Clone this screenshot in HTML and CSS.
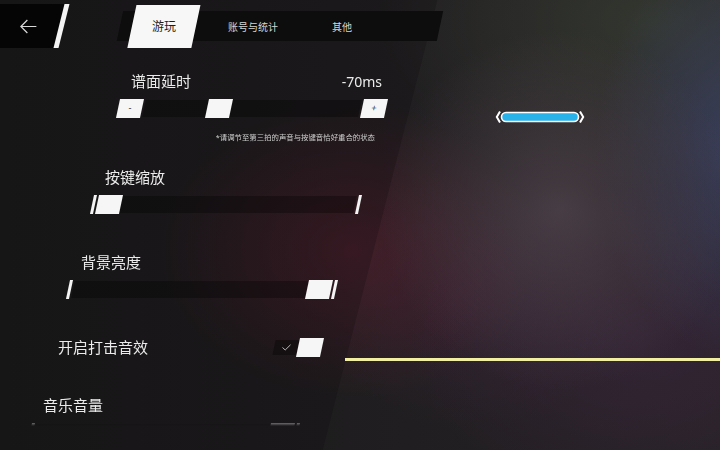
FILE: index.html
```html
<!DOCTYPE html>
<html lang="zh-CN">
<head>
    <meta charset="UTF-8">
    <meta name="viewport" content="width=device-width, initial-scale=1.0">
    <title>设置</title>
    <link rel="stylesheet" href="styles.css">
</head>
<body>
    <div class="screen">
        <header class="topbar">
            <button class="back" aria-label="返回">
                <svg width="17" height="15" viewBox="0 0 17 15"><path d="M16.5 7.5H1M7.5 1L1 7.5L7.5 14"/></svg>
            </button>
            <nav class="tabs">
                <a class="tab active"><span>游玩</span></a>
                <a class="tab"><span>账号与统计</span></a>
                <a class="tab"><span>其他</span></a>
            </nav>
        </header>

        <div class="settings">
            <div class="setting delay">
                <div class="setting-head">
                    <span class="label">谱面延时</span>
                    <span class="value">-70ms</span>
                </div>
                <div class="slider">
                    <button class="step">-</button>
                    <div class="track"><span class="handle" style="--value: 0.33"></span></div>
                    <button class="step">+</button>
                </div>
                <p class="hint">*请调节至第三拍的声音与按键音恰好重合的状态</p>
            </div>

            <div class="setting key-size">
                <div class="setting-head"><span class="label">按键缩放</span></div>
                <div class="slider">
                    <span class="slash"></span>
                    <div class="track"><span class="handle" style="--value: 0"></span></div>
                    <span class="slash"></span>
                </div>
            </div>

            <div class="setting brightness">
                <div class="setting-head"><span class="label">背景亮度</span></div>
                <div class="slider">
                    <span class="slash"></span>
                    <div class="track"><span class="handle" style="--value: 1"></span></div>
                    <span class="slash"></span>
                </div>
            </div>

            <div class="setting hit-sound">
                <span class="label">开启打击音效</span>
                <div class="toggle">
                    <span class="check">
                        <svg width="9" height="7" viewBox="0 0 9 7"><path d="M0.5 3.5L3.2 6L8.5 0.8"/></svg>
                    </span>
                    <span class="knob"></span>
                </div>
            </div>

            <div class="setting music-volume">
                <div class="setting-head"><span class="label">音乐音量</span></div>
                <div class="slider">
                    <span class="slash"></span>
                    <div class="track"><span class="handle" style="--value: 1"></span></div>
                    <span class="slash"></span>
                </div>
            </div>
        </div>

        <!-- gameplay preview -->
        <svg class="note" width="90" height="14" viewBox="0 0 90 14">
            <path d="M5 1.5L1.8 7L5 12.5M85 1.5L88.2 7L85 12.5" fill="none" stroke="#fff" stroke-width="2"/>
            <rect x="6.5" y="2.5" width="77" height="9" rx="4.5" fill="#29b2ea" stroke="#fff" stroke-width="1.6"/>
        </svg>
        <div class="judge-line"></div>
    </div>
</body>
</html>
```

FILE: styles.css
```css
* {
    box-sizing: border-box;
}
body {
    margin: 0;
    background: #171617;
    font-family: "Noto Sans", "Noto Sans CJK SC", sans-serif;
    color: #ececec;
}
.screen {
    position: relative;
    isolation: isolate;
    width: 720px;
    height: 450px;
    overflow: hidden;
    background:
        radial-gradient(circle at 560px 210px, rgba(82, 70, 78, 0.75) 0, rgba(82, 70, 78, 0) 180px),
        radial-gradient(ellipse 190px 150px at 350px 250px, rgba(92, 30, 46, 0.55), transparent),
        radial-gradient(ellipse 150px 210px at 745px 150px, rgba(64, 74, 116, 0.7), transparent),
        radial-gradient(ellipse 280px 170px at 650px 20px, rgba(58, 66, 52, 0.65), transparent),
        radial-gradient(ellipse 230px 160px at 640px 340px, rgba(70, 40, 72, 0.45), transparent),
        radial-gradient(ellipse 160px 130px at 470px 300px, rgba(66, 38, 62, 0.4), transparent),
        linear-gradient(90deg, #1b1b1b 0, #1d1c1d 35%, #272227 100%);
}
/* slanted panel behind the settings list */
.screen::before {
    content: '';
    position: absolute;
    z-index: -1;
    top: 0;
    left: -300px;
    width: 680px;
    height: 450px;
    background: rgba(8, 6, 8, 0.2);
    transform: skewX(-14.3deg);
}

/* top bar */
.topbar {
    display: flex;
    align-items: center;
    height: 52px;
}
.back {
    display: flex;
    align-items: center;
    justify-content: center;
    width: 76px;
    height: 44px;
    margin-left: -12px;
    padding: 0 0 0 10px;
    background: #050505;
    border: 0;
    border-right: 5px solid #f4f4f4;
    transform: skewX(-14deg);
}
.back svg {
    transform: skewX(14deg);
    fill: none;
    stroke: #d8d8d8;
    stroke-width: 1.2;
}
.tabs {
    display: flex;
    align-items: center;
    gap: 25px;
    height: 30px;
    margin-left: 56px;
    padding: 0 66px 0 12px;
    background: #0d0d0d;
    transform: skewX(-12deg);
}
.tab {
    display: flex;
    align-items: center;
    justify-content: center;
    width: 64px;
    height: 30px;
    font-size: 10px;
    color: #d6d6d6;
}
.tab span {
    transform: skewX(12deg);
}
.tab.active {
    height: 43px;
    background: #f7f7f7;
    color: #1c1c1c;
    font-size: 12px;
}

/* settings list, fading out at the bottom */
.settings {
    height: 398px;
    padding-top: 19px;
    -webkit-mask-image: linear-gradient(#000 366px, transparent 374px);
    mask-image: linear-gradient(#000 366px, transparent 374px);
}
.setting {
    width: 268px;
    margin-top: 38px;
}
.delay {
    margin: 0 0 0 118px;
}
.delay + .setting {
    margin-top: 25px;
}
.key-size {
    margin-left: 92px;
}
.brightness {
    margin-left: 68px;
}
.hit-sound {
    display: flex;
    align-items: center;
    justify-content: space-between;
    width: 277px;
    height: 20px;
    margin-left: 45px;
}
.music-volume {
    margin-left: 30px;
}
.setting-head {
    display: flex;
    align-items: center;
    justify-content: space-between;
    height: 20px;
    padding: 0 4px 0 13px;
}
.hit-sound .label {
    padding-left: 13px;
}
.label {
    font-size: 15px;
    line-height: 20px;
    color: #ebebeb;
}
.value {
    font-size: 14px;
    color: #ebebeb;
}
.hint {
    margin: 14px 0 0;
    padding-right: 11px;
    font-size: 7.4px;
    line-height: 10px;
    text-align: right;
    color: #cfcfcf;
}

/* sliders */
.slider {
    display: flex;
    align-items: center;
    gap: 2px;
    height: 19px;
    margin-top: 8px;
}
.slash {
    width: 3px;
    height: 19px;
    background: #f4f4f4;
    transform: skewX(-12deg);
}
.track {
    flex: 1;
    display: flex;
    align-items: center;
    height: 17px;
    background: rgba(0, 0, 0, 0.3);
    transform: skewX(-12deg);
}
.handle {
    width: 24px;
    height: 19px;
    flex: none;
    margin-left: calc((100% - 24px) * var(--value));
    background: #f6f6f6;
}
.step {
    width: 24px;
    height: 19px;
    padding: 0;
    border: 0;
    background: #f6f6f6;
    color: #333;
    font-size: 9px;
    line-height: 19px;
    transform: skewX(-12deg);
}

/* toggle */
.toggle {
    display: flex;
    align-items: center;
}
.check {
    display: flex;
    align-items: center;
    justify-content: center;
    width: 25px;
    height: 15px;
    background: rgba(0, 0, 0, 0.35);
    transform: skewX(-12deg);
}
.check svg {
    transform: skewX(12deg);
    fill: none;
    stroke: #b8b8b8;
    stroke-width: 1;
}
.knob {
    width: 24px;
    height: 19px;
    margin-left: -1px;
    background: #f6f6f6;
    transform: skewX(-12deg);
}

/* gameplay preview */
.note {
    position: absolute;
    left: 495px;
    top: 110px;
}
.judge-line {
    position: absolute;
    left: 345px;
    right: 0;
    top: 358px;
    height: 3px;
    background: #f3efa2;
}
```
